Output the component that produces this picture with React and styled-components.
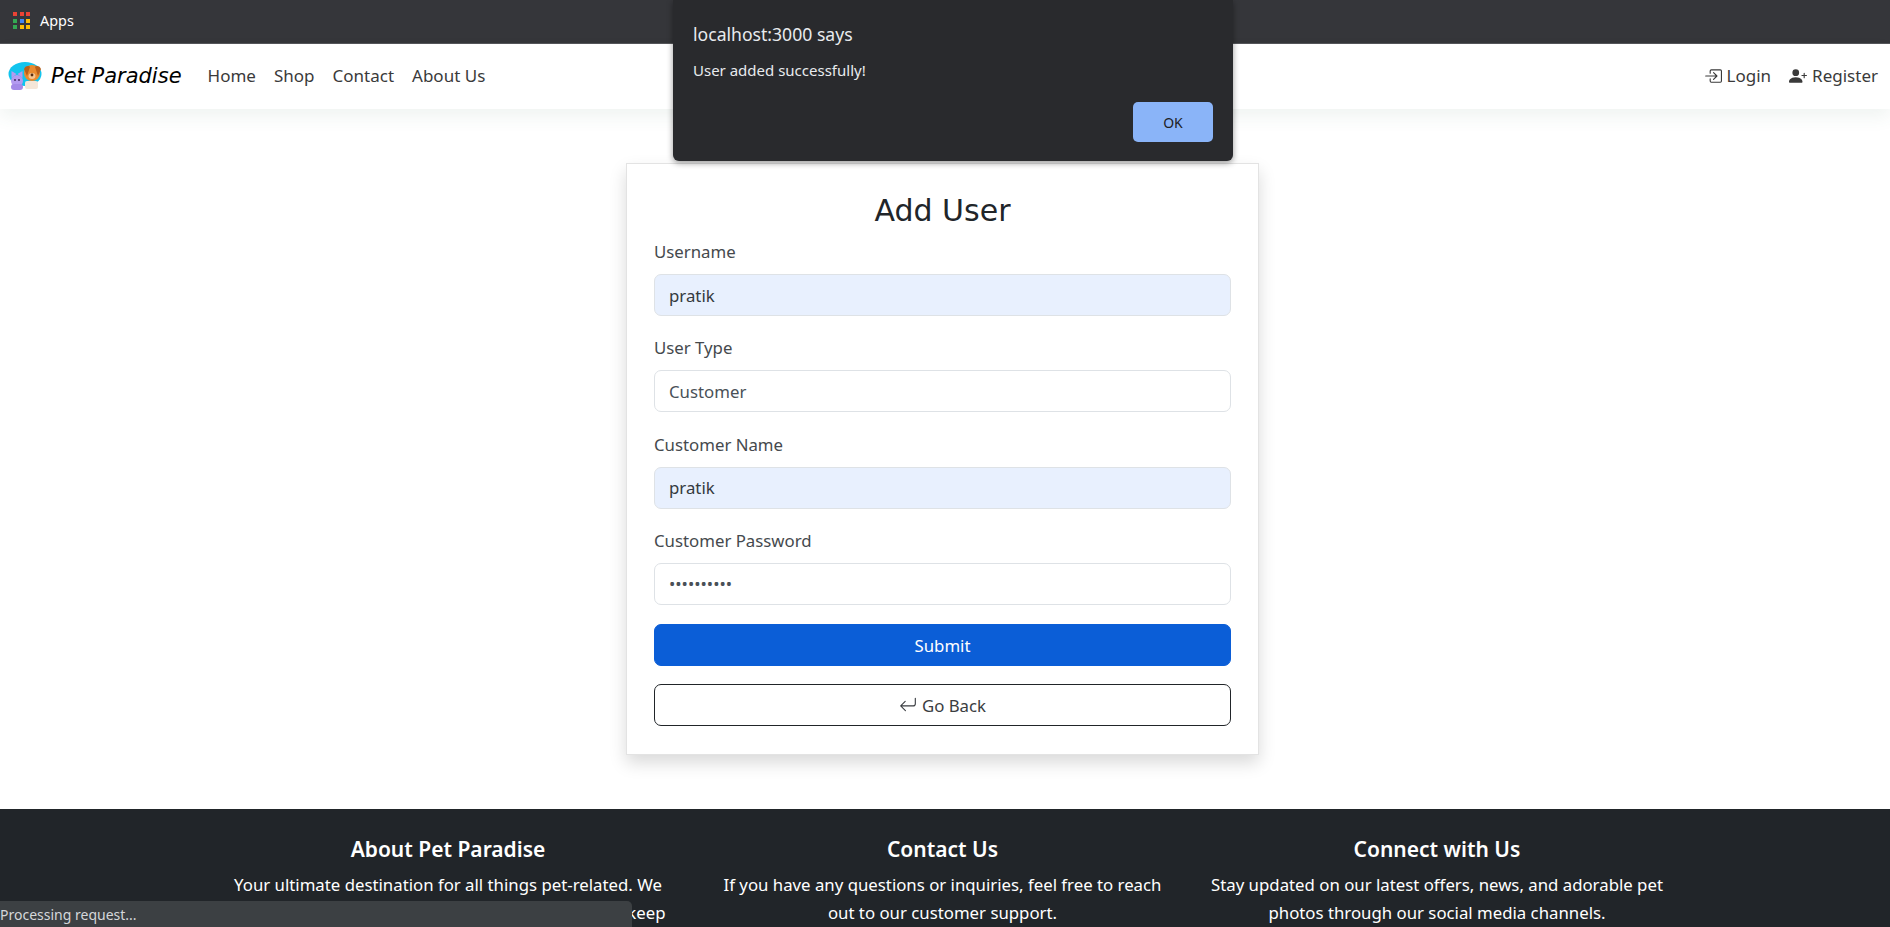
import styled, { createGlobalStyle } from "styled-components";

const GlobalStyle = createGlobalStyle`
  html, body {
    margin: 0;
    height: 100%;
    overflow: hidden;
    background: #fff;
  }
  body {
    font-family: "Noto Sans", "Open Sans", sans-serif;
    font-size: 16.8px;
    color: #212529;
  }
`;

const Page = styled.div`
  position: relative;
  height: 927px;
  overflow: hidden;
  display: flex;
  flex-direction: column;
`;

const BookmarksBar = styled.div`
  height: 41px;
  flex: none;
  display: flex;
  align-items: center;
  gap: 10px;
  padding: 0 0 2px 13px;
  background: #35363a;
  border-bottom: 1px solid #55565a;
  color: #fff;
  font-size: 14.4px;
`;

const AppsGrid = styled.div`
  display: grid;
  grid-template-columns: repeat(3, 4px);
  grid-auto-rows: 4px;
  gap: 2.5px;
`;

const AppsDot = styled.span`
  background: ${(p) => p.$color};
`;

const Navbar = styled.nav`
  height: 65px;
  flex: none;
  box-sizing: border-box;
  display: flex;
  align-items: center;
  padding: 0 12px 2px 8px;
  background: #fff;
  box-shadow: 0 8px 16px rgba(60, 120, 90, 0.08);
  position: relative;
`;

const Brand = styled.div`
  display: flex;
  align-items: center;
  gap: 9px;
  margin-right: 26px;
  font-family: "DejaVu Sans", sans-serif;
  font-style: italic;
  font-size: 21px;
  color: #000;
`;

const NavLinks = styled.div`
  display: flex;
  align-items: center;
  gap: 18px;
`;

const NavLink = styled.a`
  display: flex;
  align-items: center;
  gap: 5px;
  color: #3a3a3a;
  font-size: 17px;
`;

const NavRight = styled(NavLinks)`
  margin-left: auto;
`;

const Main = styled.main`
  flex: none;
  height: 700px;
  display: flex;
  justify-content: center;
  padding: 54px 5px 0 0;
  box-sizing: border-box;
`;

const Card = styled.form`
  width: 633px;
  height: 592px;
  box-sizing: border-box;
  padding: 28px 27px 0 27px;
  background: #fff;
  border: 1px solid #e3e3e3;
  box-shadow: 0 8px 16px rgba(0, 0, 0, 0.15);
`;

const Title = styled.h2`
  margin: 0 0 9px;
  text-align: center;
  font-family: "DejaVu Sans", sans-serif;
  font-weight: 400;
  font-size: 30px;
  line-height: 38px;
  color: #212529;
`;

const Field = styled.div`
  margin-bottom: 19.3px;
`;

const Label = styled.label`
  display: block;
  margin-bottom: 9px;
  line-height: 26px;
  color: #45494d;
`;

const Input = styled.input`
  display: block;
  width: 100%;
  height: 42px;
  box-sizing: border-box;
  padding: 0 14px;
  font: inherit;
  color: ${(p) => (p.$filled ? "#343a40" : "#495057")};
  background: ${(p) => (p.$filled ? "#e8f0fe" : "#fff")};
  border: 1px solid #dee2e6;
  border-radius: 7px;
  outline: none;
`;

const Button = styled.button`
  display: flex;
  align-items: center;
  justify-content: center;
  gap: 5px;
  width: 100%;
  height: 42px;
  margin-bottom: 18px;
  font: inherit;
  color: ${(p) => (p.$outline ? "#3a3d41" : "#fff")};
  background: ${(p) => (p.$outline ? "#fff" : "#0b5ed7")};
  border: 1px solid ${(p) => (p.$outline ? "#212529" : "#0b5ed7")};
  border-radius: 7px;
`;

const Footer = styled.footer`
  flex: 1;
  background: #212529;
  color: #fff;
  display: grid;
  grid-template-columns: repeat(3, 494.5px);
  justify-content: center;
  padding: 26px 5px 0 0;
  text-align: center;
`;

const FooterCol = styled.div`
  padding: 0 17px;
`;

const FooterTitle = styled.h5`
  margin: 0 0 8px;
  font-size: 21px;
  line-height: 28px;
  font-weight: 600;
`;

const FooterText = styled.p`
  margin: 0;
  line-height: 27.7px;
`;

const AlertBox = styled.div`
  position: absolute;
  top: 0;
  left: 673px;
  width: 560px;
  height: 161px;
  box-sizing: border-box;
  padding: 22px 20px 0 20px;
  background: #292a2d;
  border-radius: 0 0 6px 6px;
  box-shadow: 0 2px 6px rgba(0, 0, 0, 0.4);
  color: #e8eaed;
`;

const AlertTitle = styled.div`
  font-size: 17.6px;
  line-height: 24px;
`;

const AlertText = styled.div`
  margin-top: 14px;
  font-size: 15px;
  line-height: 20px;
`;

const AlertActions = styled.div`
  display: flex;
  justify-content: flex-end;
  margin-top: 22px;
`;

const OkButton = styled.button`
  width: 80px;
  height: 40px;
  font: inherit;
  font-size: 14px;
  color: #202124;
  background: #8ab4f8;
  border: 0;
  border-radius: 5px;
`;

const StatusBubble = styled.div`
  position: absolute;
  left: 0;
  bottom: 0;
  width: 632px;
  height: 26px;
  display: flex;
  align-items: center;
  background: #3c4043;
  border-radius: 0 5px 0 0;
  color: #d5d7da;
  font-size: 14px;
`;

const APPS_COLORS = [
  "#ea4335", "#ea4335", "#ea4335",
  "#34a853", "#4285f4", "#fbbc04",
  "#34a853", "#fbbc04", "#fbbc04",
];

function PetLogo() {
  return (
    <svg width="34" height="28" viewBox="0 0 34 28">
      <ellipse cx="17" cy="12" rx="16.5" ry="12" fill="#12c4ee" />
      <circle cx="9" cy="19" r="6" fill="#b49af0" />
      <path d="M3.5 16l0-7 5 3zM14.5 16l0-7-5 3z" fill="#b49af0" />
      <rect x="3" y="22" width="12" height="6" rx="3" fill="#a58ae8" />
      <circle cx="24" cy="11" r="8" fill="#e98a2e" />
      <path d="M16 7c2-4 5-3 6-2l-3 9zM33 7c-2-4-5-3-6-2l3 9z" fill="#b9601a" />
      <rect x="17" y="19" width="13" height="8" rx="2" fill="#f4e6d8" />
      <ellipse cx="24" cy="14" rx="3.5" ry="3" fill="#f6c58e" />
      <circle cx="24" cy="13" r="1.4" fill="#5a2d10" />
      <circle cx="7" cy="18" r="0.9" fill="#33204f" />
      <circle cx="11" cy="18" r="0.9" fill="#33204f" />
    </svg>
  );
}

function LoginIcon() {
  return (
    <svg width="18" height="18" viewBox="0 0 16 16" fill="#3a3a3a">
      <path fillRule="evenodd" d="M6 3.5a.5.5 0 0 1 .5-.5h8a.5.5 0 0 1 .5.5v9a.5.5 0 0 1-.5.5h-8a.5.5 0 0 1-.5-.5v-2a.5.5 0 0 0-1 0v2A1.5 1.5 0 0 0 6.5 14h8a1.5 1.5 0 0 0 1.5-1.5v-9A1.5 1.5 0 0 0 14.5 2h-8A1.5 1.5 0 0 0 5 3.5v2a.5.5 0 0 0 1 0v-2z" />
      <path fillRule="evenodd" d="M11.854 8.354a.5.5 0 0 0 0-.708l-3-3a.5.5 0 1 0-.708.708L10.293 7.5H1.5a.5.5 0 0 0 0 1h8.793l-2.147 2.146a.5.5 0 0 0 .708.708l3-3z" />
    </svg>
  );
}

function RegisterIcon() {
  return (
    <svg width="18" height="18" viewBox="0 0 16 16" fill="#3a3a3a">
      <path d="M1 14s-1 0-1-1 1-4 6-4 6 3 6 4-1 1-1 1H1zm5-6a3 3 0 1 0 0-6 3 3 0 0 0 0 6z" />
      <path fillRule="evenodd" d="M13.5 5a.5.5 0 0 1 .5.5V7h1.5a.5.5 0 0 1 0 1H14v1.5a.5.5 0 0 1-1 0V8h-1.5a.5.5 0 0 1 0-1H13V5.5a.5.5 0 0 1 .5-.5z" />
    </svg>
  );
}

function ReturnIcon() {
  return (
    <svg width="18" height="18" viewBox="0 0 16 16" fill="#3a3d41">
      <path fillRule="evenodd" d="M14.5 1.5a.5.5 0 0 1 .5.5v4.8a2.5 2.5 0 0 1-2.5 2.5H2.707l3.347 3.346a.5.5 0 0 1-.708.708l-4.2-4.2a.5.5 0 0 1 0-.708l4-4a.5.5 0 1 1 .708.708L2.707 8.3H12.5A1.5 1.5 0 0 0 14 6.8V2a.5.5 0 0 1 .5-.5z" />
    </svg>
  );
}

export default function App() {
  return (
    <Page>
      <GlobalStyle />
      <BookmarksBar>
        <AppsGrid>
          {APPS_COLORS.map((color, i) => (
            <AppsDot key={i} $color={color} />
          ))}
        </AppsGrid>
        Apps
      </BookmarksBar>

      <Navbar>
        <Brand>
          <PetLogo />
          Pet Paradise
        </Brand>
        <NavLinks>
          <NavLink>Home</NavLink>
          <NavLink>Shop</NavLink>
          <NavLink>Contact</NavLink>
          <NavLink>About Us</NavLink>
        </NavLinks>
        <NavRight>
          <NavLink><LoginIcon /> Login</NavLink>
          <NavLink><RegisterIcon /> Register</NavLink>
        </NavRight>
      </Navbar>

      <Main>
        <Card>
          <Title>Add User</Title>
          <Field>
            <Label>Username</Label>
            <Input $filled defaultValue="pratik" />
          </Field>
          <Field>
            <Label>User Type</Label>
            <Input defaultValue="Customer" />
          </Field>
          <Field>
            <Label>Customer Name</Label>
            <Input $filled defaultValue="pratik" />
          </Field>
          <Field>
            <Label>Customer Password</Label>
            <Input type="password" defaultValue="pratik1234" />
          </Field>
          <Button type="button">Submit</Button>
          <Button type="button" $outline><ReturnIcon /> Go Back</Button>
        </Card>
      </Main>

      <Footer>
        <FooterCol>
          <FooterTitle>About Pet Paradise</FooterTitle>
          <FooterText>Your ultimate destination for all things pet-related. We offer top-quality products and friendly support, to keep</FooterText>
        </FooterCol>
        <FooterCol>
          <FooterTitle>Contact Us</FooterTitle>
          <FooterText>If you have any questions or inquiries, feel free to reach out to our customer support.</FooterText>
        </FooterCol>
        <FooterCol>
          <FooterTitle>Connect with Us</FooterTitle>
          <FooterText>Stay updated on our latest offers, news, and adorable pet photos through our social media channels.</FooterText>
        </FooterCol>
      </Footer>

      <AlertBox>
        <AlertTitle>localhost:3000 says</AlertTitle>
        <AlertText>User added successfully!</AlertText>
        <AlertActions>
          <OkButton type="button">OK</OkButton>
        </AlertActions>
      </AlertBox>

      <StatusBubble>Processing request...</StatusBubble>
    </Page>
  );
}
